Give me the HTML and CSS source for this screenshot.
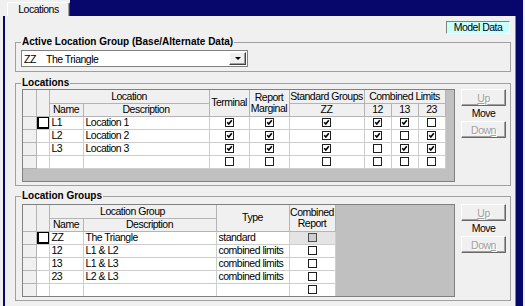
FILE: index.html
```html
<!DOCTYPE html>
<html lang="en">
<head>
    <meta charset="UTF-8">
    <meta name="viewport" content="width=device-width, initial-scale=1.0">
    <title>Locations</title>
    <link rel="stylesheet" href="styles.css">
</head>
<body>
    <svg class="defs" width="0" height="0">
        <symbol id="cb-off" viewBox="0 0 9 9">
            <rect x=".5" y=".5" width="8" height="8" fill="#fff" stroke="#1e1e1e"/>
        </symbol>
        <symbol id="cb-on" viewBox="0 0 9 9">
            <rect x=".5" y=".5" width="8" height="8" fill="#fff" stroke="#1e1e1e"/>
            <path d="M2.2 4.3l1.6 1.7 3-3.7" fill="none" stroke="#000" stroke-width="1.6"/>
        </symbol>
        <symbol id="cb-dis" viewBox="0 0 9 9">
            <rect x=".5" y=".5" width="8" height="8" fill="#cfcfcf" stroke="#4a4a4a"/>
        </symbol>
    </svg>

    <div class="app">
        <div class="tabstrip">
            <div class="tab">Locations</div>
            <div class="tabfill"></div>
        </div>

        <div class="frame">
        <div class="panel">
            <div class="topbar">
                <div class="model">Model Data</div>
            </div>

            <fieldset class="group g-active">
                <legend>Active Location Group (Base/Alternate Data)</legend>
                <div class="combo">
                    <span class="combo-code">ZZ</span>
                    <span class="combo-text">The Triangle</span>
                    <span class="combo-btn"><i class="arrow"></i></span>
                </div>
            </fieldset>

            <fieldset class="group g-locs">
                <legend>Locations</legend>
                <div class="group-body">
                    <div class="grid">
                        <table class="tbl">
                            <colgroup>
                                <col class="c-rh"><col class="c-sel"><col class="c-name"><col class="c-desc">
                                <col class="c-flag"><col class="c-flag"><col class="c-zz">
                                <col class="c-lim"><col class="c-lim"><col class="c-lim">
                            </colgroup>
                            <thead>
                                <tr>
                                    <th class="rh" rowspan="2"></th>
                                    <th rowspan="2"></th>
                                    <th colspan="2">Location</th>
                                    <th rowspan="2">Terminal</th>
                                    <th rowspan="2">Report<br>Marginal</th>
                                    <th>Standard Groups</th>
                                    <th colspan="3">Combined Limits</th>
                                </tr>
                                <tr>
                                    <th>Name</th>
                                    <th>Description</th>
                                    <th>ZZ</th>
                                    <th>12</th>
                                    <th>13</th>
                                    <th>23</th>
                                </tr>
                            </thead>
                            <tbody>
                                <tr>
                                    <td class="rh"></td><td class="sel cur"></td>
                                    <td>L1</td><td>Location 1</td>
                                    <td class="ck"><svg class="cb"><use href="#cb-on"/></svg></td>
                                    <td class="ck"><svg class="cb"><use href="#cb-on"/></svg></td>
                                    <td class="ck"><svg class="cb"><use href="#cb-on"/></svg></td>
                                    <td class="ck"><svg class="cb"><use href="#cb-on"/></svg></td>
                                    <td class="ck"><svg class="cb"><use href="#cb-on"/></svg></td>
                                    <td class="ck"><svg class="cb"><use href="#cb-off"/></svg></td>
                                </tr>
                                <tr>
                                    <td class="rh"></td><td class="sel"></td>
                                    <td>L2</td><td>Location 2</td>
                                    <td class="ck"><svg class="cb"><use href="#cb-on"/></svg></td>
                                    <td class="ck"><svg class="cb"><use href="#cb-on"/></svg></td>
                                    <td class="ck"><svg class="cb"><use href="#cb-on"/></svg></td>
                                    <td class="ck"><svg class="cb"><use href="#cb-on"/></svg></td>
                                    <td class="ck"><svg class="cb"><use href="#cb-off"/></svg></td>
                                    <td class="ck"><svg class="cb"><use href="#cb-on"/></svg></td>
                                </tr>
                                <tr>
                                    <td class="rh"></td><td class="sel"></td>
                                    <td>L3</td><td>Location 3</td>
                                    <td class="ck"><svg class="cb"><use href="#cb-on"/></svg></td>
                                    <td class="ck"><svg class="cb"><use href="#cb-on"/></svg></td>
                                    <td class="ck"><svg class="cb"><use href="#cb-on"/></svg></td>
                                    <td class="ck"><svg class="cb"><use href="#cb-off"/></svg></td>
                                    <td class="ck"><svg class="cb"><use href="#cb-on"/></svg></td>
                                    <td class="ck"><svg class="cb"><use href="#cb-on"/></svg></td>
                                </tr>
                                <tr>
                                    <td class="rh"></td><td class="sel"></td>
                                    <td></td><td></td>
                                    <td class="ck"><svg class="cb"><use href="#cb-off"/></svg></td>
                                    <td class="ck"><svg class="cb"><use href="#cb-off"/></svg></td>
                                    <td class="ck"><svg class="cb"><use href="#cb-off"/></svg></td>
                                    <td class="ck"><svg class="cb"><use href="#cb-off"/></svg></td>
                                    <td class="ck"><svg class="cb"><use href="#cb-off"/></svg></td>
                                    <td class="ck"><svg class="cb"><use href="#cb-off"/></svg></td>
                                </tr>
                            </tbody>
                        </table>
                    </div>
                    <div class="movers">
                        <button class="btn" disabled><u>U</u>p</button>
                        <span class="move">Move</span>
                        <button class="btn" disabled>Dow<u>n</u></button>
                    </div>
                </div>
            </fieldset>

            <fieldset class="group g-groups">
                <legend>Location Groups</legend>
                <div class="group-body">
                    <div class="grid">
                        <table class="tbl">
                            <colgroup>
                                <col class="c-rh"><col class="c-sel"><col class="c-name"><col class="c-gdesc">
                                <col class="c-type"><col class="c-rep">
                            </colgroup>
                            <thead>
                                <tr>
                                    <th class="rh" rowspan="2"></th>
                                    <th rowspan="2"></th>
                                    <th colspan="2">Location Group</th>
                                    <th rowspan="2">Type</th>
                                    <th rowspan="2">Combined<br>Report</th>
                                </tr>
                                <tr>
                                    <th>Name</th>
                                    <th>Description</th>
                                </tr>
                            </thead>
                            <tbody>
                                <tr>
                                    <td class="rh"></td><td class="sel cur"></td>
                                    <td>ZZ</td><td>The Triangle</td><td>standard</td>
                                    <td class="ck off"><svg class="cb"><use href="#cb-dis"/></svg></td>
                                </tr>
                                <tr>
                                    <td class="rh"></td><td class="sel"></td>
                                    <td>12</td><td>L1 &amp; L2</td><td>combined limits</td>
                                    <td class="ck"><svg class="cb"><use href="#cb-off"/></svg></td>
                                </tr>
                                <tr>
                                    <td class="rh"></td><td class="sel"></td>
                                    <td>13</td><td>L1 &amp; L3</td><td>combined limits</td>
                                    <td class="ck"><svg class="cb"><use href="#cb-off"/></svg></td>
                                </tr>
                                <tr>
                                    <td class="rh"></td><td class="sel"></td>
                                    <td>23</td><td>L2 &amp; L3</td><td>combined limits</td>
                                    <td class="ck"><svg class="cb"><use href="#cb-off"/></svg></td>
                                </tr>
                                <tr>
                                    <td class="rh"></td><td class="sel"></td>
                                    <td></td><td></td><td></td>
                                    <td class="ck"><svg class="cb"><use href="#cb-off"/></svg></td>
                                </tr>
                            </tbody>
                        </table>
                    </div>
                    <div class="movers">
                        <button class="btn" disabled><u>U</u>p</button>
                        <span class="move">Move</span>
                        <button class="btn" disabled>Dow<u>n</u></button>
                    </div>
                </div>
            </fieldset>
        </div>
        </div>
    </div>
</body>
</html>
```

FILE: styles.css
```css
* {
    box-sizing: border-box;
}

body {
    margin: 0;
    width: 525px;
    height: 306px;
    overflow: hidden;
    background-color: #f0f0f0;
    color: #000;
    font-family: "Liberation Sans", Arial, sans-serif;
    font-size: 10.5px;
    letter-spacing: -0.5px;
}

.defs {
    position: absolute;
    width: 0;
    height: 0;
}

.app {
    display: flex;
    flex-direction: column;
    height: 306px;
}

/* tab strip */
.tabstrip {
    display: flex;
    height: 16px;
    padding-left: 7px;
    padding-right: 2px;
}
.tab {
    margin-top: 2px;
    width: 63px;
    height: 14px;
    border: 1px solid #fff;
    border-right-color: #404040;
    border-bottom: none;
    border-radius: 2px 2px 0 0;
    box-shadow: inset -1px 0 0 #a0a0a0;
    text-align: center;
    line-height: 12px;
}
.tabfill {
    flex: 1;
    background-color: #07076b;
}

.frame {
    flex: 1;
    display: flex;
    margin: 0 2px 0 3px;
    padding: 0 7px 0 2px;
    background-color: #07076b;
}
.panel {
    flex: 1;
    background-color: #f0f0f0;
    border-right: 1px solid #808080;
    padding: 5px 4px 0 10px;
}

.topbar {
    display: flex;
    justify-content: flex-end;
    padding-right: 1px;
}
.model {
    width: 64px;
    height: 13px;
    background-color: #c8ffff;
    border: 1px solid;
    border-color: #808080 #fff #fff #808080;
    text-align: center;
    line-height: 11px;
}

/* group boxes */
.group {
    margin: 0;
    min-width: 0;
    padding: 0 4px 3px 5px;
    border: 1px solid #a0a0a0;
}
.group legend {
    padding: 0 1px;
    font-size: 10px;
    font-weight: bold;
    letter-spacing: normal;
    line-height: 12px;
}
.g-active {
    margin-top: 2px;
    padding-bottom: 4px;
}
.g-locs {
    margin-top: 5px;
}
.g-groups {
    margin-top: 4px;
}
.g-groups .group-body {
    margin-top: 2px;
}

.combo {
    display: flex;
    align-items: center;
    margin-top: 2px;
    width: 227px;
    height: 17px;
    background-color: #fff;
    border: 1px solid #808080;
    padding: 1px;
}
.combo-code {
    width: 23px;
    padding-left: 1px;
}
.combo-text {
    flex: 1;
}
.combo-btn {
    display: flex;
    align-items: center;
    justify-content: center;
    width: 17px;
    height: 13px;
    background-color: #f0f0f0;
    border: 1px solid;
    border-color: #fff #404040 #404040 #fff;
    box-shadow: inset -1px -1px 0 #a0a0a0;
}
.arrow {
    width: 0;
    height: 0;
    border-left: 3px solid transparent;
    border-right: 3px solid transparent;
    border-top: 3px solid #000;
}

.group-body {
    display: flex;
    gap: 6px;
}

/* grids */
.grid {
    margin-left: 1px;
    width: 433px;
    height: 93px;
    background-color: #c0c0c0;
    border: 1px solid #808080;
    overflow: hidden;
}
.tbl {
    border-collapse: collapse;
    table-layout: fixed;
}
.tbl th, .tbl td {
    height: 13px;
    padding: 0 2px;
    border: 1px solid #cdcdcd;
    white-space: nowrap;
    overflow: hidden;
    line-height: 11px;
    text-align: left;
}
.tbl th {
    padding: 0;
    font-weight: normal;
    text-align: center;
    background-color: #f0f0f0;
    border-color: #b4b4b4;
}
.tbl td {
    background-color: #fff;
}
.tbl thead tr:first-child th {
    border-top: none;
}
.tbl tr > :first-child {
    border-left: none;
}
.tbl td.rh {
    background-color: #f0f0f0;
    border-color: #b4b4b4;
}
.tbl td.cur {
    box-shadow: inset 2px -2px 0 #000, inset -1px 1px 0 #000;
}
.tbl td.ck {
    padding: 0;
}
.tbl td.off {
    background-color: #e4e4e4;
}
.cb {
    display: block;
    width: 9px;
    height: 9px;
    margin: 0 auto;
}

.c-rh { width: 13px; }
.c-sel { width: 13px; }
.c-name { width: 34px; }
.c-desc { width: 126px; }
.c-flag { width: 40px; }
.c-zz { width: 75px; }
.c-lim { width: 27px; }
.c-gdesc { width: 133px; }
.c-type { width: 73px; }
.c-rep { width: 46px; }

/* move buttons */
.movers {
    display: flex;
    flex-direction: column;
    align-items: center;
    width: 45px;
}
.btn {
    width: 45px;
    height: 17px;
    padding: 0;
    background-color: #f0f0f0;
    border: 1px solid;
    border-color: #fff #696969 #696969 #fff;
    box-shadow: inset -1px -1px 0 #a0a0a0;
    font: inherit;
    letter-spacing: inherit;
    color: #a0a0a0;
    text-shadow: 1px 1px 0 #fff;
}
.move {
    line-height: 15px;
}
```
